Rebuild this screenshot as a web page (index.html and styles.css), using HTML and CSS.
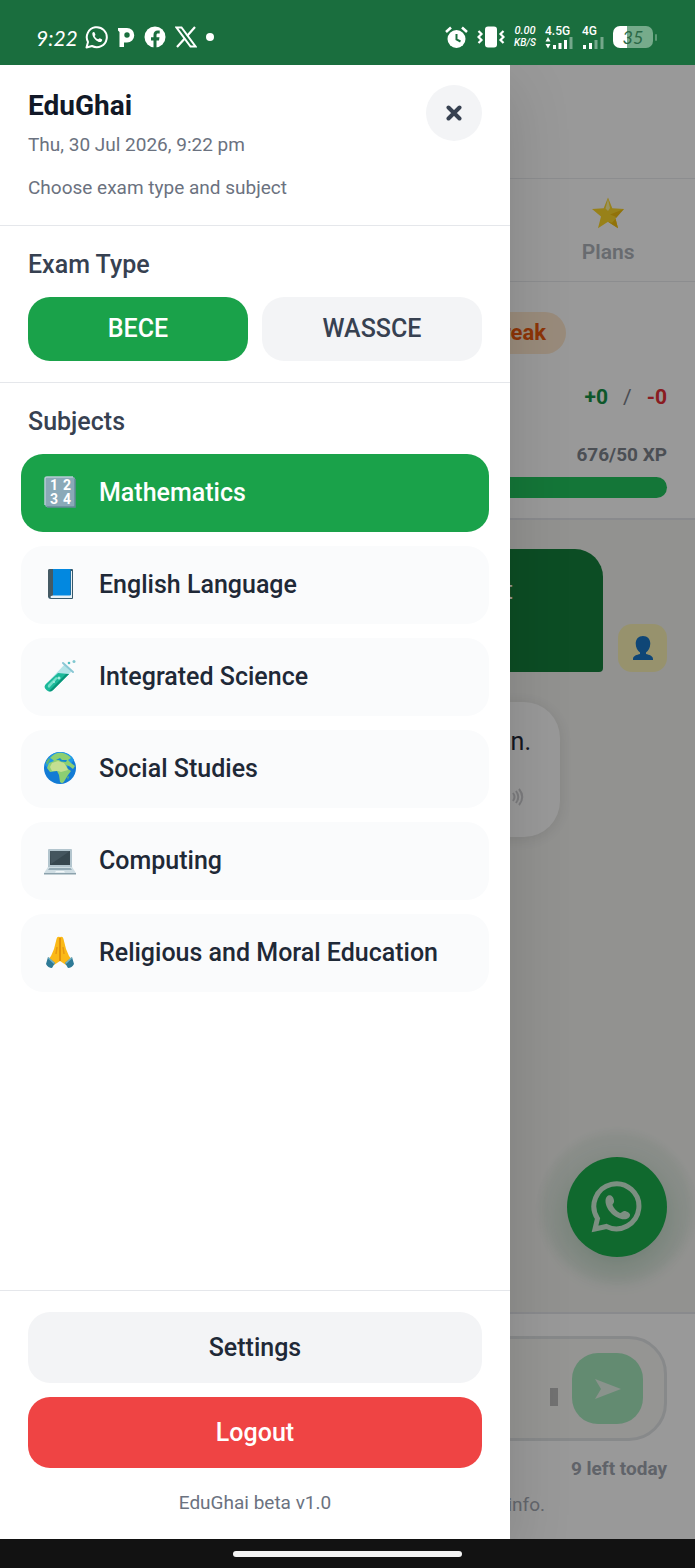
FILE: index.html
```html
<!DOCTYPE html>
<html lang="en">
<head>
<meta charset="utf-8">
<meta name="viewport" content="width=device-width, initial-scale=1">
<title>EduGhai</title>
<link rel="stylesheet" href="styles.css">
</head>
<body>
<div class="status">
  <div class="status-left">
    <span class="clock">9:22</span>
    <svg width="24" height="24" viewBox="0 0 24 24" fill="none" stroke="#fff"><path d="M1.500 22.500 3 17A10 10 0 1 1 7 21Z" stroke-width="2" stroke-linejoin="round"/><path d="M7.300 8.200c.5-1.400 1.900-1.500 2.300-.6l.8 1.900c.2.600-.8 1.300-.7 1.700.8 1.500 1.900 2.500 3.400 3.100.5.100 1.200-1.200 1.700-1l2 1c.9.500.3 2.100-.9 2.600-2.800 1-8.800-3.900-8.600-8.700z" fill="#fff" stroke="none"/></svg>
    <svg width="17" height="20" viewBox="0 0 17 20"><path fill="#fff" fill-rule="evenodd" d="M0 1h9a7 7 0 0 1 0 14.500H6V20H1.500V5L0 3.500zM9 5.300a2.700 2.700 0 1 0 0 5.400 2.700 2.700 0 0 0 0-5.400z"/></svg>
    <svg width="22" height="22" viewBox="0 0 22 22"><circle cx="11" cy="11" r="10.500" fill="#fff"/><path fill="#1a6e3e" d="M9.500 22v-7.500H7v-3.300h2.500V9c0-2.900 1.500-4.500 4.200-4.500h2v3h-1.600c-1.200 0-1.600.6-1.600 1.600v2.100h3l-.5 3.300H12.500V22z"/></svg>
    <svg width="22" height="22" viewBox="0 0 22 22" fill="none" stroke="#fff"><path d="M1.500 1.500h5L20.500 20.500h-5z" stroke-width="2"/><path d="M20 1 12.500 9.500M9.500 12.800 2 21" stroke-width="2.200"/></svg>
    <span class="dot"></span>
  </div>
  <div class="status-right">
    <svg width="23" height="23" viewBox="0 0 23 23"><circle cx="11.500" cy="13" r="9" fill="#fff"/><path d="M1 6 6 1.500M22 6l-5-4.500" stroke="#fff" stroke-width="2.600" fill="none"/><path d="M11.500 8v5.500l4 2" stroke="#1a6e3e" stroke-width="2" fill="none"/></svg>
    <svg width="28" height="22" viewBox="0 0 28 22"><rect x="8" y="0.500" width="12" height="21" rx="3" fill="#fff"/><path d="m1.500 5 3 3-3 3 3 3-3 3M26.500 5l-3 3 3 3-3 3 3 3" stroke="#fff" stroke-width="2.200" fill="none"/></svg>
    <span class="speed"><span>0.00</span><span class="unit">KB/S</span></span>
    <span class="net"><span>4.5G</span>
      <svg width="28" height="12" viewBox="0 0 28 12"><path fill="#fff" d="m3 0 2.500 4.500h-5zM3 11.500.5 7h5zM8 8h3v4H8zM13.500 6h3v6h-3zM19 3h3v9h-3z"/><path fill="#fff" opacity=".4" d="M24.500 0h3v12h-3z"/></svg></span>
    <span class="net"><span>4G</span>
      <svg width="22" height="12" viewBox="0 0 22 12"><path fill="#fff" d="M1 8h3v4H1zM7 6h3v6H7z"/><path fill="#fff" opacity=".4" d="M12.500 3h3v9h-3zM18.500 0h3v12h-3z"/></svg></span>
    <span class="battery"><span class="cell">35</span><span class="nub"></span></span>
  </div>
</div>

<div class="stage">
  <main class="page">
    <div class="topbar"></div>
    <nav class="tabs">
      <a class="tab" href="#plans">
        <svg width="34" height="34" viewBox="0 0 34 34"><path fill="#fdd82b" d="m17 1.500 4.300 10.800 11.700.8-9 7.500 3 11.600L17 25.800 7 32.200l3-11.600-9-7.500 11.700-.8z"/><path fill="#fff59d" d="m17 3-2.500 9.500L17 15l2-3z"/><path fill="#f2bf10" d="m33 13.100-14 5.400 5 2.100 3 11.600-10-6.400 4 1z"/></svg>
        <span>Plans</span>
      </a>
    </nav>
    <section class="stats">
      <div class="pill-row"><span class="pill">Streak</span></div>
      <div class="score"><b class="plus">+0</b><span>/</span><b class="minus">-0</b></div>
      <div class="xp">676/50 XP</div>
      <div class="bar"></div>
    </section>
    <section class="chat">
      <div class="row-user">
        <p class="bubble-user">t</p>
        <span class="avatar"><svg width="22" height="26" viewBox="0 0 22 26"><path fill="#1976c5" d="M11 1c4.500 0 7.300 3 7.300 7.500 0 4-2 7.500-4.300 9v1.500c3 1 7 1.500 7 5v1H1v-1c0-3.500 4-4 7-5v-1.500c-2.300-1.500-4.300-5-4.300-9C3.700 4 6.500 1 11 1z"/></svg></span>
      </div>
      <div class="bubble-bot">
        <p>n.</p>
        <svg width="34" height="20" viewBox="0 0 34 20" fill="none" stroke="#cfcfd2" stroke-width="2"><path d="M2 7h4l6-5v16l-6-5H2z" fill="#cfcfd2"/><path d="M16 6q3 4 0 8M19 4q4.500 6 0 12M22 2q6.500 8 0 16"/></svg>
      </div>
    </section>
    <form class="composer">
      <div class="field">
        <input type="text" aria-label="Message">
        <span class="thumb"></span>
        <button class="send" type="button" aria-label="Send"><svg width="28" height="22" viewBox="0 0 28 22"><path fill="#e6f5ea" d="M1 1 27 11 1 21l6-10z"/></svg></button>
      </div>
      <div class="left-today">9 left today</div>
      <div class="note">info.</div>
    </form>
    <button class="fab" type="button" aria-label="WhatsApp">
      <svg width="52" height="52" viewBox="0 0 52 52"><path fill="none" stroke="#cfeed8" stroke-width="5" d="M4 48 6.500 37.500A22.500 22.500 0 1 1 15.500 45.500Z"/><path fill="#cfeed8" d="M14.500 20c0-4.500 3-6.500 5.500-5.500 2.200 1 3.500 5 3 6.500-.4 1.500-1.500 2-1.500 3 1 3 4 6.500 7.500 8 1.500 0 2.500-1.800 4-2 2-.2 5.500 1.600 6 3.500.4 3-3 5-6 4.800C24.500 38 14.500 29 14.500 20z"/></svg>
    </button>
  </main>
  <div class="scrim"></div>

  <aside class="drawer">
    <header class="drawer-head">
      <div>
        <h1>EduGhai</h1>
        <p class="date">Thu, 30 Jul 2026, 9:22 pm</p>
        <p class="hint">Choose exam type and subject</p>
      </div>
      <button class="close" type="button" aria-label="Close"><svg width="16" height="16" viewBox="0 0 16 16"><path d="m2.500 2.500 11 11m0-11-11 11" stroke="#374151" stroke-width="4" stroke-linecap="round"/></svg></button>
    </header>
    <section class="exam">
      <h2>Exam Type</h2>
      <div class="exam-options">
        <button class="exam-btn active" type="button">BECE</button>
        <button class="exam-btn" type="button">WASSCE</button>
      </div>
    </section>
    <section class="subjects">
      <h2>Subjects</h2>
      <button class="subject active" type="button">
        <svg class="emoji" viewBox="0 0 34 34"><rect x="2" y="2" width="30" height="30" rx="2" fill="#8aa9b8"/><path d="M2 30V4q0-2 2-2h26" stroke="#b7cbd5" stroke-width="1.500" fill="none"/><path d="M32 4v28H4" stroke="#67899a" stroke-width="1.500" fill="none"/><g fill="#fff" font-family="Roboto, sans-serif" font-weight="700" font-size="14" text-anchor="middle"><text x="11" y="15">1</text><text x="24" y="15">2</text><text x="11" y="29">3</text><text x="24" y="29">4</text></g></svg>
        Mathematics</button>
      <button class="subject" type="button">
        <svg class="emoji" viewBox="0 0 34 34"><path fill="#37596b" d="M7 2h22q1 0 1 1v28q0 1-1 1H8q-3 0-3-3V4q0-2 2-2z"/><path fill="#e8f1f5" d="M9 28h19V4h1v27H8q-1.500-1.500 1-3z"/><path fill="#0288e0" d="M10 2h17.500v26.500H10z"/><path fill="#455a64" d="M5 4q0-2 2-2h3v26.500q-3 0-3.500 2L5 29z"/></svg>
        English Language</button>
      <button class="subject" type="button">
        <svg class="emoji" viewBox="0 0 34 34"><path fill="#b4e4e8" d="m22 5 7 7L10 31q-3 3-6.500 0T3 25z"/><path fill="#1cb99a" d="m15 14 11 1L10 31q-3 3-6.500 0T3 25z"/><path fill="#089477" d="m26 15-3 0L6 32q2 1 4-1z"/><path fill="#75dfc9" d="m13 18 2 1L6 29q-2-1-1-3z"/><path d="m20 4 10 9" stroke="#8ac7d4" stroke-width="2" stroke-linecap="round"/><circle cx="31" cy="2.500" r="1.500" fill="#81c8d0"/><circle cx="26" cy="4" r="1.300" fill="#4fbfc0"/><circle cx="16" cy="19" r="1.500" fill="#a5efdf"/><circle cx="11" cy="23" r="1" fill="#a5efdf"/></svg>
        Integrated Science</button>
      <button class="subject" type="button">
        <svg class="emoji" viewBox="0 0 34 34"><circle cx="17" cy="17" r="16" fill="#127bd5"/><path fill="#1e99e8" d="M2 14Q5 2 17 1q10 0 14 8l-5 6-18 6z"/><path fill="#8ccf72" d="M7 7q5-6 13-5 6 2 8 5l-3 2 3 3 4 3-2 3-4-3-3-1 2 4 3 2-3 4-3 5q-2 5-5 2l-1-7-2-4-7 1-3-4 2-5 5-2-2-2z"/><path fill="#c4df92" d="m9 12 6-2 6 2 2 3 2 4-7 2-3-1-6 0-2-4z"/><path fill="#128bd0" d="m13 9 4-2 2 2 5 0-1 2-5-.5-2-1.500z"/><path fill="#5eb670" d="m24 26 2-1-1 4zM3 11l3-4 1 2-3 5z"/></svg>
        Social Studies</button>
      <button class="subject" type="button">
        <svg class="emoji" viewBox="0 0 34 34"><path fill="#b3c5ce" d="M6 6h22q1 0 1 1v17H5V7q0-1 1-1z"/><path fill="#37474f" d="M7 8h20v14H7z"/><path fill="#51646e" d="M7 8h20L8 21z" opacity=".5"/><path fill="#cfdde3" d="M5 24h24l4 6H1z"/><path fill="#94aab5" d="M6.500 25h21l1.500 2H5z"/><path fill="#8ca2ad" d="M1 30h32v1.500H1z"/><path fill="#f2f7f9" d="M13 28h8l1 1.500H12z"/></svg>
        Computing</button>
      <button class="subject" type="button">
        <svg class="emoji" viewBox="0 0 34 34"><path fill="#fbb917" d="M17 2q-3-1-3.500 2L11 14 8 21l-3 4 6 5 6-4 6 4 6-5-3-4-3-7-2.500-10Q20 1 17 2z"/><path d="M17 3v23" stroke="#d8860b" stroke-width="1.500"/><path d="m14 12-1 7M20 12l1 7" stroke="#e99a12" stroke-width="1.500" fill="none"/><path fill="#2e7a96" d="m5 22 7 6-3 5q-4 0-6-4zM29 22l-7 6 3 5q4 0 6-4z"/><path d="m5.500 23 6 5.500M28.500 23l-6 5.500" stroke="#72b1c6" stroke-width="1.500"/></svg>
        Religious and Moral Education</button>
    </section>
    <footer class="drawer-foot">
      <button class="foot-btn" type="button">Settings</button>
      <button class="foot-btn logout" type="button">Logout</button>
      <p class="version">EduGhai beta v1.0</p>
    </footer>
  </aside>
</div>
<div class="navbar"><span class="handle"></span></div>
</body>
</html>
```

FILE: styles.css
```css
* { box-sizing: border-box; }
body {
  margin: 0;
  min-height: 100vh;
  display: flex;
  flex-direction: column;
  font-family: Roboto, "Liberation Sans", sans-serif;
  color: #1f2937;
  background: #fff;
}
h1, h2, p { margin: 0; }
button { font: inherit; color: inherit; border: 0; padding: 0; cursor: pointer; }
svg { display: block; flex: none; }

/* phone status bar */
.status {
  height: 65px;
  padding: 9px 38px 0 36px;
  display: flex;
  align-items: center;
  justify-content: space-between;
  background: #1a6e3e;
  color: #fff;
}
.status-left, .status-right { display: flex; align-items: center; gap: 9px; }
.clock { margin-right: -2px; font-family: Lato, sans-serif; font-style: italic; font-size: 21px; }
.dot { width: 8px; height: 8px; border-radius: 50%; background: #fff; }
.speed { display: flex; flex-direction: column; font: italic 500 11px/12px Roboto, sans-serif; text-align: center; }
.unit { font-size: 10px; }
.net { display: flex; flex-direction: column; font: 500 12px/12px Roboto, sans-serif; }
.battery { display: flex; align-items: center; gap: 2px; }
.cell {
  width: 40px;
  height: 22px;
  border-radius: 7px;
  background: linear-gradient(90deg, #fff 35%, #76ab8b 35%);
  color: #2b6847;
  font: italic 18px/22px Lato, sans-serif;
  text-align: center;
}
.nub { width: 2px; height: 7px; border-radius: 2px; background: #5c9a75; }

.stage { flex: 1; position: relative; display: flex; flex-direction: column; overflow: hidden; }

/* page behind the drawer */
.page { flex: 1; display: flex; flex-direction: column; position: relative; background: #fff; }
.topbar { height: 113px; }
.tabs {
  height: 104px;
  display: grid;
  grid-template-columns: repeat(4, 1fr);
  border-top: 1px solid #e9ebee;
  border-bottom: 1px solid #e9ebee;
}
.tab {
  grid-column: 4;
  padding-top: 2px;
  display: flex;
  flex-direction: column;
  align-items: center;
  justify-content: center;
  gap: 8px;
  color: #adb2ba;
  font-size: 21px;
  line-height: 28px;
  font-weight: 600;
  text-decoration: none;
}
.stats {
  padding: 30px 28px 20px;
  display: flex;
  flex-direction: column;
  align-items: flex-end;
  border-bottom: 2px solid #e5e7eb;
}
.pill-row { align-self: stretch; display: flex; justify-content: flex-end; padding-right: 101px; }
.pill {
  padding: 0 20px;
  border-radius: 22px;
  background: #ffe8cd;
  color: #ea580c;
  font-size: 22px;
  line-height: 42px;
  font-weight: 700;
}
.score { margin-top: 29px; display: flex; gap: 15px; font-size: 21px; line-height: 28px; color: #7b8089; }
.plus { color: #169247; }
.minus { color: #e62f37; }
.xp { margin-top: 30px; font-size: 19px; line-height: 28px; font-weight: 700; color: #7e848d; }
.bar { align-self: stretch; margin-top: 8px; height: 21px; border-radius: 11px; background: #22c55e; }
.chat { flex: 1; padding: 29px 28px; background: #f4f4f1; }
.row-user { display: flex; align-items: flex-end; gap: 15px; }
.bubble-user {
  flex: 1;
  min-height: 123px;
  padding: 22px 90px 22px 28px;
  border-radius: 28px 28px 4px 28px;
  background: #15803d;
  color: #fff;
  font-size: 25px;
  line-height: 40px;
  text-align: right;
}
.avatar { width: 49px; height: 48px; display: grid; place-items: center; border-radius: 14px; background: #fcf3b6; }
.bubble-bot {
  margin: 30px 107px 0 0;
  padding: 22px 29px 30px;
  display: flex;
  flex-direction: column;
  align-items: flex-end;
  gap: 27px;
  border-radius: 36px;
  background: #fff;
  box-shadow: 0 2px 16px rgba(0, 0, 0, .1);
  font-size: 25px;
  line-height: 36px;
}
.composer { padding: 22px 28px 20px; border-top: 2px solid #e5e7eb; }
.field {
  height: 105px;
  padding: 0 21px 0 28px;
  display: flex;
  align-items: center;
  gap: 14px;
  border: 3px solid #e2e4e7;
  border-radius: 38px;
  background: #f8f8f6;
}
.field input { flex: 1; min-width: 0; border: 0; background: none; font: inherit; font-size: 25px; }
.thumb { width: 8px; height: 18px; margin-top: 16px; background: #bdbdbd; }
.send { width: 71px; height: 71px; display: grid; place-items: center; border-radius: 26px; background: #a5e8bd; }
.left-today { margin-top: 14px; font-size: 19px; line-height: 28px; font-weight: 700; color: #a0a6af; text-align: right; }
.note { margin-top: 8px; padding-right: 122px; font-size: 19px; line-height: 28px; color: #a6abb4; text-align: right; }
.fab {
  position: absolute;
  right: 28px;
  bottom: 282px;
  width: 100px;
  height: 100px;
  display: grid;
  place-items: center;
  border-radius: 50%;
  background: #1caf4e;
  box-shadow: 0 0 8px 26px rgba(34, 140, 74, .06), 0 10px 34px rgba(22, 120, 60, .24);
}
.scrim { position: absolute; inset: 0; background: rgba(0, 0, 0, .4); }

/* drawer */
.drawer {
  position: absolute;
  top: 0;
  bottom: 0;
  left: 0;
  width: 510px;
  max-width: 85%;
  display: flex;
  flex-direction: column;
  background: #fff;
  box-shadow: 0 20px 60px rgba(0, 0, 0, .14);
}
.drawer-head {
  padding: 20px 28px 24px;
  display: flex;
  justify-content: space-between;
  border-bottom: 1px solid #e5e7eb;
}
h1 { font-size: 28px; line-height: 42px; font-weight: 700; color: #111827; }
.date, .hint { font-size: 19px; color: #6b7280; }
.date { line-height: 36px; }
.hint { margin-top: 12px; line-height: 26px; }
.close { width: 56px; height: 56px; display: grid; place-items: center; border-radius: 50%; background: #f3f4f6; }
h2 { padding: 23px 0 16px; font-size: 25px; line-height: 32px; font-weight: 500; color: #374151; }
.exam { padding: 0 28px 21px; border-bottom: 1px solid #e5e7eb; }
.exam-options { display: grid; grid-template-columns: 1fr 1fr; gap: 14px; }
.exam-btn { height: 64px; padding-bottom: 2px; border-radius: 22px; background: #f3f4f6; color: #374151; font-size: 25px; font-weight: 500; }
.exam-btn.active { background: #1aa24a; color: #fff; }
.subjects { flex: 1; padding: 0 21px; display: flex; flex-direction: column; gap: 14px; }
.subjects h2 { padding: 23px 7px 2px; }
.subject {
  height: 78px;
  padding: 0 22px 2px;
  display: flex;
  align-items: center;
  gap: 22px;
  border-radius: 22px;
  background: #fafbfc;
  color: #1f2937;
  font-size: 25px;
  font-weight: 500;
  text-align: left;
}
.subject.active { background: #1aa24a; color: #fff; }
.emoji { width: 34px; height: 34px; }
.drawer-foot { padding: 21px 28px 22px; display: flex; flex-direction: column; gap: 14px; border-top: 1px solid #e5e7eb; }
.foot-btn { height: 71px; border-radius: 22px; background: #f3f4f6; color: #1f2937; font-size: 25px; font-weight: 500; }
.foot-btn.logout { background: #ef4444; color: #fff; }
.version { padding-top: 7px; font-size: 19px; line-height: 28px; color: #6b7280; text-align: center; }

/* gesture bar */
.navbar { height: 29px; display: grid; place-items: center; background: #121212; }
.handle { width: 33%; height: 6px; border-radius: 3px; background: #f4f4f4; }
```
